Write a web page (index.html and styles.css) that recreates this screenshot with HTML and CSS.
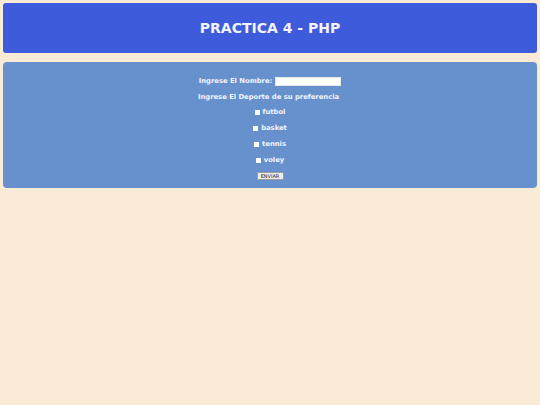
FILE: index.html
```html
<!DOCTYPE html>
<html lang="es">
<head>
<meta charset="utf-8">
<title>Practica 4 - PHP</title>
<link rel="stylesheet" href="styles.css">
</head>
<body>
<header class="header">
  <h1 class="title">PRACTICA 4 - PHP</h1>
</header>
<form class="panel">
  <div class="row">
    <label class="label" for="nombre">Ingrese El Nombre:</label>
    <input class="text-input" type="text" id="nombre" name="nombre">
  </div>
  <div class="row row-tight">
    <span class="label">Ingrese El Deporte de su preferencia</span>
  </div>
  <div class="row">
    <label class="option"><input class="check" type="checkbox" name="deporte[]" value="futbol"> futbol</label>
  </div>
  <div class="row">
    <label class="option"><input class="check" type="checkbox" name="deporte[]" value="basket"> basket</label>
  </div>
  <div class="row">
    <label class="option"><input class="check" type="checkbox" name="deporte[]" value="tennis"> tennis</label>
  </div>
  <div class="row">
    <label class="option"><input class="check" type="checkbox" name="deporte[]" value="voley"> voley</label>
  </div>
  <div class="row">
    <button class="submit" type="submit">ENVIAR</button>
  </div>
</form>
</body>
</html>
```

FILE: styles.css
```css
html, body {
  margin: 0;
  padding: 0;
}

body {
  background: #faebd7;
  padding: 3px;
  font-family: "DejaVu Sans", Verdana, sans-serif;
  color: #f2f4ff;
}

.header {
  height: 50px;
  background: #3d5bdb;
  border-radius: 3px;
  display: flex;
  align-items: center;
  justify-content: center;
}

.title {
  margin: 0;
  font-size: 14px;
  font-weight: bold;
}

.panel {
  margin: 9px 0 0;
  height: 126px;
  box-sizing: border-box;
  padding-top: 11px;
  background: #6791cd;
  border-radius: 4px;
  display: flex;
  flex-direction: column;
  align-items: center;
}

.row {
  height: 16px;
  display: flex;
  align-items: center;
  justify-content: center;
  font-size: 6.8px;
  font-weight: bold;
}

.row-tight {
  height: 15px;
}

.label {
  margin-right: 3px;
}

.text-input {
  appearance: none;
  margin: 0;
  padding: 0;
  width: 66px;
  height: 9px;
  box-sizing: border-box;
  background: #fff;
  border: 1px solid #e8e8e8;
}

.option {
  display: flex;
  align-items: center;
  gap: 3px;
}

.check {
  appearance: none;
  margin: 0;
  width: 5px;
  height: 5px;
  background: #fff;
  border: none;
}

.submit {
  appearance: none;
  margin: 0;
  padding: 0 2px;
  width: 27px;
  height: 8px;
  box-sizing: border-box;
  background: #eeeeee;
  border: 1px solid #9a9a9a;
  border-radius: 1px;
  font-family: "DejaVu Sans", Verdana, sans-serif;
  font-size: 5px;
  line-height: 6px;
  color: #222;
}
```
